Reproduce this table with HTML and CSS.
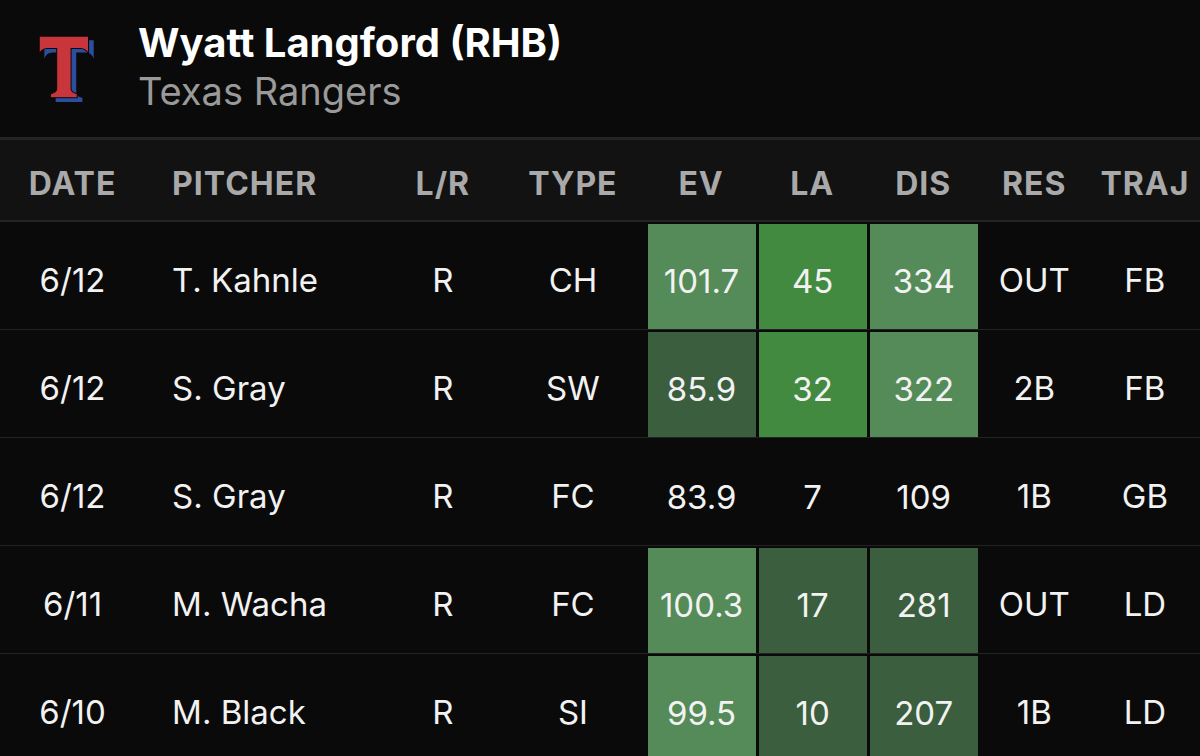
FILE: index.html
```html
<!DOCTYPE html>
<html lang="en">
<head>
<meta charset="utf-8">
<title>Wyatt Langford (RHB)</title>
<link rel="stylesheet" href="styles.css">
</head>
<body>
<header class="top">
  <svg class="logo" viewBox="0 0 60 70" width="62" height="72" aria-label="Texas Rangers logo">
    <path d="M2,4 H50 V22 Q48,16 42,16 H33 V56 Q34,59 39,60 V64 H13 V60 Q18,59 19,56 V16 H10 Q4,16 2,22 Z" transform="translate(5,4)" fill="#2b4f9e"/>
    <path d="M2,4 H50 V22 Q48,16 42,16 H33 V56 Q34,59 39,60 V64 H13 V60 Q18,59 19,56 V16 H10 Q4,16 2,22 Z" fill="#c8363c" stroke="#0a0a0a" stroke-width="1"/>
  </svg>
  <div class="names">
    <div class="player">Wyatt Langford (RHB)</div>
    <div class="team">Texas Rangers</div>
  </div>
</header>
<table class="log">
  <colgroup>
    <col class="c-date"><col class="c-pitcher"><col class="c-lr"><col class="c-type">
    <col class="c-stat"><col class="c-stat"><col class="c-stat"><col class="c-stat"><col class="c-traj">
  </colgroup>
  <thead>
    <tr>
      <th>DATE</th><th class="left">PITCHER</th><th>L/R</th><th>TYPE</th>
      <th>EV</th><th>LA</th><th>DIS</th><th>RES</th><th>TRAJ</th>
    </tr>
  </thead>
  <tbody>
    <tr>
      <td>6/12</td><td class="left">T. Kahnle</td><td>R</td><td>CH</td>
      <td class="s"><div class="box light">101.7</div></td><td class="s"><div class="box mid">45</div></td><td class="s"><div class="box light">334</div></td>
      <td>OUT</td><td>FB</td>
    </tr>
    <tr>
      <td>6/12</td><td class="left">S. Gray</td><td>R</td><td>SW</td>
      <td class="s"><div class="box dark">85.9</div></td><td class="s"><div class="box mid">32</div></td><td class="s"><div class="box light">322</div></td>
      <td>2B</td><td>FB</td>
    </tr>
    <tr>
      <td>6/12</td><td class="left">S. Gray</td><td>R</td><td>FC</td>
      <td class="s"><div class="box">83.9</div></td><td class="s"><div class="box">7</div></td><td class="s"><div class="box">109</div></td>
      <td>1B</td><td>GB</td>
    </tr>
    <tr>
      <td>6/11</td><td class="left">M. Wacha</td><td>R</td><td>FC</td>
      <td class="s"><div class="box light">100.3</div></td><td class="s"><div class="box dark">17</div></td><td class="s"><div class="box dark">281</div></td>
      <td>OUT</td><td>LD</td>
    </tr>
    <tr>
      <td>6/10</td><td class="left">M. Black</td><td>R</td><td>SI</td>
      <td class="s"><div class="box light">99.5</div></td><td class="s"><div class="box dark">10</div></td><td class="s"><div class="box dark">207</div></td>
      <td>1B</td><td>LD</td>
    </tr>
  </tbody>
</table>
</body>
</html>
```
FILE: styles.css
```css
html, body {
  margin: 0;
  padding: 0;
  background: #0a0a0a;
  color: #f2f2f2;
  font-family: Inter, "Noto Sans", "Liberation Sans", sans-serif;
  overflow: hidden;
}
.top {
  height: 140px;
  box-sizing: border-box;
  display: flex;
  align-items: flex-start;
  padding: 0 0 0 37px;
  border-bottom: 3px solid #252525;
  background: #0a0a0a;
}
.logo {
  margin-top: 32px;
  flex: none;
}
.names {
  margin-left: 39px;
  padding-top: 18px;
}
.player {
  font-size: 40px;
  line-height: 49px;
  font-weight: 700;
  color: #ffffff;
}
.team {
  font-size: 38px;
  line-height: 49px;
  font-weight: 400;
  color: #9a9a9a;
}
.log {
  width: 1200px;
  table-layout: fixed;
  border-collapse: collapse;
  border-spacing: 0;
}
.c-date { width: 145px; }
.c-pitcher { width: 240px; }
.c-lr { width: 115px; }
.c-type { width: 145px; }
.c-stat { width: 111px; }
.c-traj { width: 110px; }
thead th {
  height: 74px;
  padding: 6px 0 0 0;
  background: #121212;
  color: #a9a9a9;
  font-size: 32px;
  font-weight: 700;
  letter-spacing: 1px;
  text-align: center;
  border-bottom: 2px solid #242424;
  white-space: nowrap;
}
tbody td {
  height: 98px;
  padding: 9px 0 0 0;
  font-size: 33px;
  font-weight: 400;
  text-align: center;
  border-bottom: 1px solid #222222;
  color: #f2f2f2;
}
tbody td.s {
  height: 107px;
  padding: 0;
}
.left {
  text-align: left;
}
th.left, td.left { padding-left: 27px; }
.box {
  height: 105px;
  box-sizing: border-box;
  margin: 2px 1px 0 2px;
  padding-top: 9px;
  display: flex;
  align-items: center;
  justify-content: center;
}
.light { background: #548b58; }
.mid { background: #428a40; }
.dark { background: #3a5e3e; }
```
